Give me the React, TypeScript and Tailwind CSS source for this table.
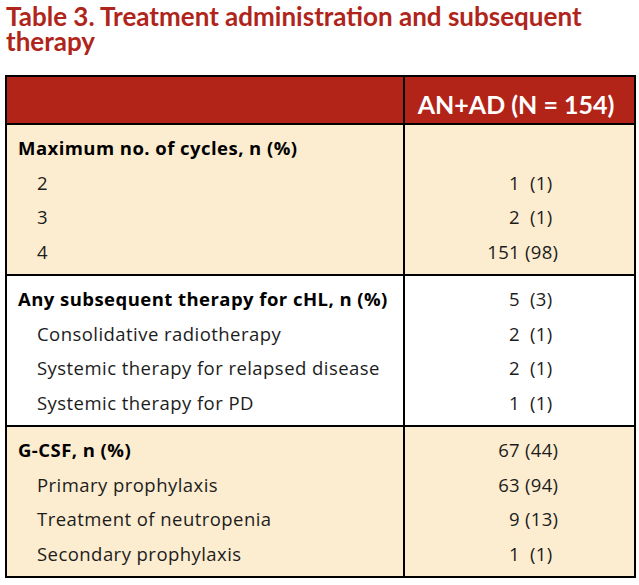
import React from 'react';

type Row = { label: string; n: string; pct: string; bold?: boolean };

const sections: { bg: string; rows: Row[] }[] = [
  {
    bg: 'bg-[#fdedd0]',
    rows: [
      { label: 'Maximum no. of cycles, n (%)', n: '', pct: '', bold: true },
      { label: '2', n: '1', pct: '(1)' },
      { label: '3', n: '2', pct: '(1)' },
      { label: '4', n: '151', pct: '(98)' },
    ],
  },
  {
    bg: 'bg-white',
    rows: [
      { label: 'Any subsequent therapy for cHL, n (%)', n: '5', pct: '(3)', bold: true },
      { label: 'Consolidative radiotherapy', n: '2', pct: '(1)' },
      { label: 'Systemic therapy for relapsed disease', n: '2', pct: '(1)' },
      { label: 'Systemic therapy for PD', n: '1', pct: '(1)' },
    ],
  },
  {
    bg: 'bg-[#fdedd0]',
    rows: [
      { label: 'G-CSF, n (%)', n: '67', pct: '(44)', bold: true },
      { label: 'Primary prophylaxis', n: '63', pct: '(94)' },
      { label: 'Treatment of neutropenia', n: '9', pct: '(13)' },
      { label: 'Secondary prophylaxis', n: '1', pct: '(1)' },
    ],
  },
];

const Value = ({ n, pct }: { n: string; pct: string }) => {
  if (!n) return null;
  return (
    <div className="flex items-center">
      <span className="w-[33px] text-right">{n}</span>
      <span className={pct.length === 3 ? 'pl-[10px]' : 'pl-[5px]'}>{pct}</span>
    </div>
  );
};

export default function App() {
  return (
    <div className="w-[639px] h-[585px] bg-white text-[#1c1c1c]" style={{ fontFamily: '"Open Sans", "Noto Sans", sans-serif' }}>
      <h2
        className="pl-[6px] pt-[4px] text-[26px] leading-[25px] font-bold text-[#b0251b]"
        style={{ fontFamily: 'Lato, sans-serif' }}
      >
        Table 3. Treatment administration and subsequent therapy
      </h2>

      <div className="ml-[5px] mt-[21px] w-[631px] border-2 border-black">
        <div className="grid grid-cols-[396px_1fr] h-[48px] bg-[#b22418] border-b-2 border-black">
          <div />
          <div className="border-l-2 border-black flex items-end justify-center pb-[6px] pr-[7px]">
            <span className="text-white font-bold text-[25px] leading-[25px]" style={{ fontFamily: 'Lato, sans-serif' }}>
              AN+AD (N = 154)
            </span>
          </div>
        </div>

        {sections.map((s, i) => (
          <div key={i} className={`grid grid-cols-[396px_1fr] ${s.bg} ${i > 0 ? 'border-t-2 border-black' : ''}`}>
            <div className="pt-[6px] pb-[5px] tracking-[0.45px]">
              {s.rows.map((r) => (
                <div
                  key={r.label}
                  className={`h-[34.5px] flex items-center text-[18.5px] ${r.bold ? 'pl-[11px] font-bold text-black' : 'pl-[30px]'}`}
                >
                  {r.label}
                </div>
              ))}
            </div>
            <div className="border-l-2 border-black pt-[6px] pb-[5px] pl-[82px] text-[18.5px] tracking-[0.3px]">
              {s.rows.map((r) => (
                <div key={r.label} className="h-[34.5px] flex items-center">
                  <Value n={r.n} pct={r.pct} />
                </div>
              ))}
            </div>
          </div>
        ))}
      </div>
    </div>
  );
}
